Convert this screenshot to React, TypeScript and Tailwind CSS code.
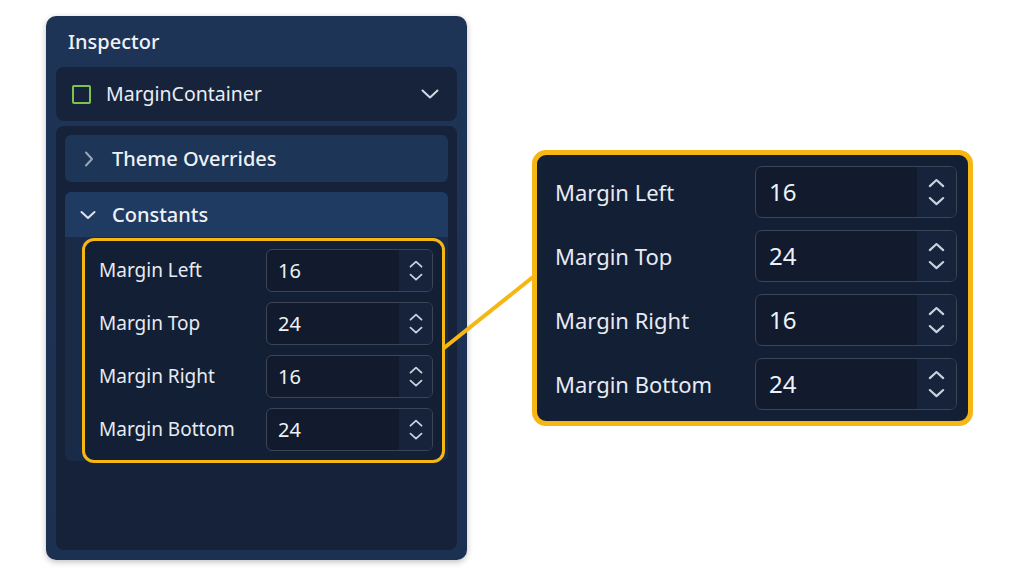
import React from "react";

const font = { fontFamily: '"Noto Sans", "Open Sans", sans-serif' };

function ChevronUp({ size }: { size: number }) {
  return (
    <svg width={size} height={size * 0.6} viewBox="0 0 14 8" fill="none">
      <path d="M1.5 6.5 L7 1.5 L12.5 6.5" stroke="#c9d1dd" strokeWidth="1.8" strokeLinecap="round" strokeLinejoin="round" />
    </svg>
  );
}
function ChevronDown({ size }: { size: number }) {
  return (
    <svg width={size} height={size * 0.6} viewBox="0 0 14 8" fill="none">
      <path d="M1.5 1.5 L7 6.5 L12.5 1.5" stroke="#c9d1dd" strokeWidth="1.8" strokeLinecap="round" strokeLinejoin="round" />
    </svg>
  );
}

const rows = [
  { label: "Margin Left", value: "16" },
  { label: "Margin Top", value: "24" },
  { label: "Margin Right", value: "16" },
  { label: "Margin Bottom", value: "24" },
];

function SmallRow({ label, value }: { label: string; value: string }) {
  return (
    <div className="flex items-center justify-between h-[43px]">
      <span className="text-[19px] text-[#e6ebf3]">{label}</span>
      <div className="w-[167px] h-[43px] flex rounded-[6px] border border-[#3a4558] bg-[#111b2d] overflow-hidden">
        <div className="flex-1 flex items-center pl-[11px] text-[20px] text-[#eef2f7]">{value}</div>
        <div className="w-[33px] bg-[#16233a] flex flex-col items-center justify-center gap-[5px]">
          <ChevronUp size={14} />
          <ChevronDown size={14} />
        </div>
      </div>
    </div>
  );
}

function BigRow({ label, value }: { label: string; value: string }) {
  return (
    <div className="flex items-center justify-between h-[52px]">
      <span className="text-[22px] text-[#e6ebf3]">{label}</span>
      <div className="w-[202px] h-[52px] flex rounded-[7px] border border-[#3a4558] bg-[#111b2d] overflow-hidden">
        <div className="flex-1 flex items-center pl-[13px] text-[24px] text-[#eef2f7]">{value}</div>
        <div className="w-[39px] bg-[#16233a] flex flex-col items-center justify-center gap-[7px]">
          <ChevronUp size={17} />
          <ChevronDown size={17} />
        </div>
      </div>
    </div>
  );
}

export default function App() {
  return (
    <div className="relative w-[1024px] h-[576px] bg-white overflow-hidden" style={font}>
      <div className="flex items-start pl-[46px] pt-[16px]">
        {/* Inspector panel */}
        <div className="w-[421px] h-[544px] rounded-[10px] bg-gradient-to-b from-[#1e3456] to-[#1c3051] shadow-[0_2px_6px_rgba(0,0,0,0.25)] flex flex-col px-[10px] pb-[10px]">
          <div className="h-[51px] flex items-center pl-[12px] text-[20px] font-medium text-[#eef2f7]">Inspector</div>
          <div className="h-[54px] rounded-[8px] bg-[#16233b] flex items-center pl-[16px] pr-[18px]">
            <div className="w-[19px] h-[19px] border-2 border-[#7dc24f] rounded-[2px]" />
            <span className="ml-[15px] text-[19.5px] text-[#e8edf5]">MarginContainer</span>
            <div className="ml-auto">
              <svg width="18" height="10" viewBox="0 0 18 10" fill="none">
                <path d="M1.5 1.5 L9 8.5 L16.5 1.5" stroke="#d2d9e4" strokeWidth="2" strokeLinecap="round" strokeLinejoin="round" />
              </svg>
            </div>
          </div>
          <div className="mt-[5px] flex-1 rounded-[8px] bg-[#15223a] p-[9px] flex flex-col">
            <div className="h-[47px] rounded-[6px] bg-[#1d3556] flex items-center pl-[19px]">
              <svg width="10" height="16" viewBox="0 0 10 16" fill="none">
                <path d="M2 1.5 L8 8 L2 14.5" stroke="#9aa6b8" strokeWidth="2" strokeLinecap="round" strokeLinejoin="round" />
              </svg>
              <span className="ml-[18px] text-[20px] font-medium text-[#eef2f7]">Theme Overrides</span>
            </div>
            <div className="mt-[10px] h-[45px] rounded-t-[6px] bg-[#1f3b62] flex items-center pl-[15px]">
              <svg width="16" height="10" viewBox="0 0 16 10" fill="none">
                <path d="M1.5 2 L8 8 L14.5 2" stroke="#dfe5ee" strokeWidth="2" strokeLinecap="round" strokeLinejoin="round" />
              </svg>
              <span className="ml-[16px] text-[20px] font-medium text-[#eef2f7]">Constants</span>
            </div>
            <div className="rounded-b-[6px] bg-[#1a2b47] pl-[17px] pr-[3px] pt-[1px]">
              <div className="-mb-[2px] rounded-[12px] border-[3px] border-[#f6b614] bg-[#131f34] pl-[14px] pr-[9px] pt-[8px] pb-[9px] flex flex-col gap-[10px]">
                {rows.map((r) => (
                  <SmallRow key={r.label} {...r} />
                ))}
              </div>
            </div>
          </div>
        </div>

        {/* Zoomed callout */}
        <div className="ml-[65px] mt-[134px] w-[441px] h-[276px] rounded-[14px] border-[5px] border-[#f6b614] bg-[#131f34] pl-[18px] pr-[11px] pt-[11px] pb-[11px] flex flex-col gap-[12px]">
          {rows.map((r) => (
            <BigRow key={r.label} {...r} />
          ))}
        </div>
      </div>

      {/* connector line */}
      <svg className="absolute left-0 top-0 pointer-events-none" width="1024" height="576">
        <line x1="444" y1="348" x2="533" y2="277" stroke="#f6b614" strokeWidth="4" strokeLinecap="round" />
      </svg>
    </div>
  );
}
